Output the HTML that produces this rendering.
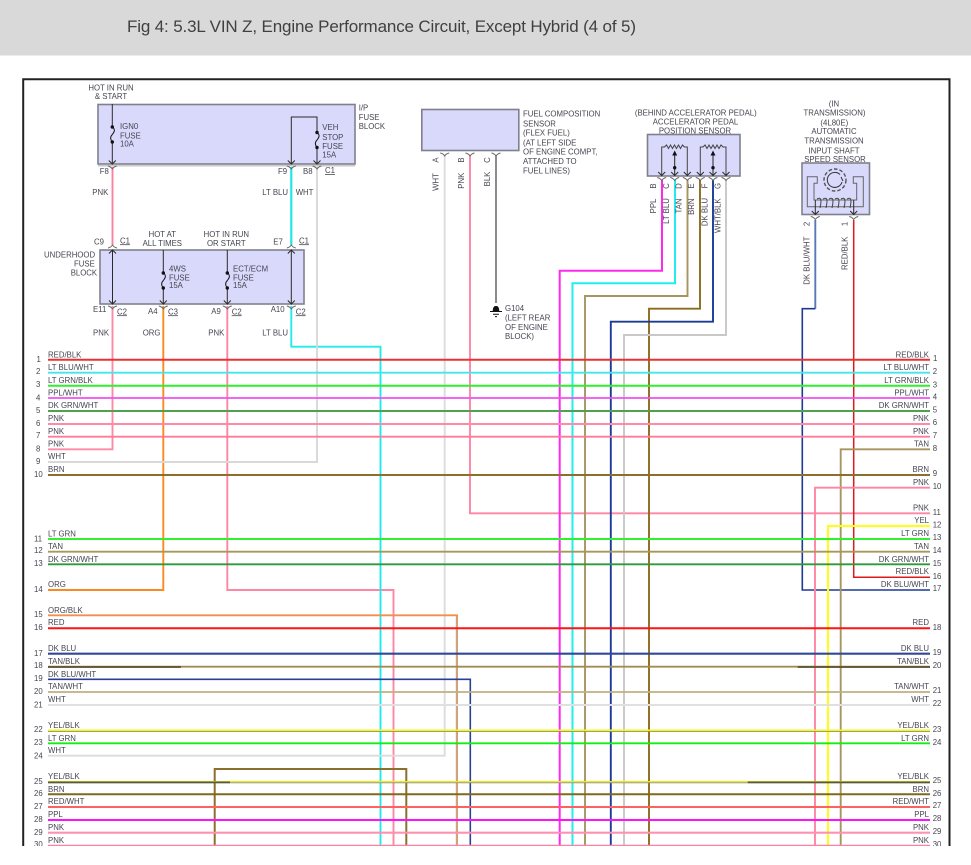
<!DOCTYPE html>
<html>
<head>
<meta charset="utf-8">
<style>
html,body{margin:0;padding:0;background:#fff;width:971px;height:865px;overflow:hidden}
svg{display:block}
text{font-family:"Liberation Sans",sans-serif;font-size:7.8px;fill:#454552}
.e{text-anchor:end}.m{text-anchor:middle}
.w{fill:none;stroke-linejoin:miter}
.b{fill:#d9d9fb;stroke:#80808c;stroke-width:1.6}
.k{fill:none;stroke:#2a2a2a;stroke-width:1}
.u{text-decoration:underline}
.dg{filter:blur(.25px)}
</style>
</head>
<body>
<svg width="971" height="865" viewBox="0 0 971 865" xmlns="http://www.w3.org/2000/svg">
<defs>
<clipPath id="c"><rect x="0" y="56" width="971" height="790"/></clipPath>
<g id="dn"><path d="M-3.5 -3.5L0 0L3.5 -3.5" fill="none" stroke="#2a2a2a" stroke-width="1"/><path d="M-4.5 2C-2 2.5 -1 3.5 0 5C1 3.5 2 2.5 4.5 2" fill="none" stroke="#666" stroke-width=".9"/></g>
<g id="up"><path d="M-3.5 3.5L0 0L3.5 3.5" fill="none" stroke="#2a2a2a" stroke-width="1"/><path d="M-4.5 -2C-2 -2.5 -1 -3.5 0 -5C1 -3.5 2 -2.5 4.5 -2" fill="none" stroke="#666" stroke-width=".9"/></g>
<g id="fu"><circle cx="0" cy="0" r="1.7" fill="#111"/><circle cx="0" cy="15" r="1.7" fill="#111"/><path d="M0 0C3.5 2.5 2 5 0 7.5C-2.5 10 -2 12.5 0 15" fill="none" stroke="#111" stroke-width="1"/></g>
</defs>
<rect width="971" height="865" fill="#fff"/>
<rect width="971" height="55.5" fill="#d9d9d9"/>
<text x="127" y="32" textLength="509" lengthAdjust="spacing" style="font-size:17px;fill:#404040">Fig 4: 5.3L VIN Z, Engine Performance Circuit, Except Hybrid (4 of 5)</text>

<g clip-path="url(#c)"><g class="dg">
<path d="M23.2 846V79.2H949.5V846" fill="none" stroke="#222" stroke-width="2"/>

<!-- vertical / routed wires -->
<g class="w" stroke-width="1.9">
<path d="M112.5 167V245" stroke="#ff7fa0"/>
<path d="M112.5 306V449.3H48" stroke="#ff8aa8"/>
<path d="M163.3 306V590H48" stroke="#f98a20"/>
<path d="M227.3 306V590H393.5V846" stroke="#ff85a5"/>
<path d="M291.3 167V245" stroke="#20e8e8" stroke-width="2.2"/>
<path d="M291.3 306V346.7H380.5V846" stroke="#20eaea"/>
<path d="M317 167V462H48" stroke="#d8d8d8"/>
<path d="M444.7 155V755.7H48" stroke="#dcdcdc"/>
<path d="M470 155V513.3H930" stroke="#ff85a5"/>
<path d="M496 155V303" stroke="#5a5a5a" stroke-width="1.4"/>
<path d="M662 180V270.7H559.7V846" stroke="#ff28ee" stroke-width="2"/>
<path d="M675 180V283.3H572.5V846" stroke="#20eeee" stroke-width="2"/>
<path d="M687.5 180V296H585V846" stroke="#a89460"/>
<path d="M700 180V308.7H649V846" stroke="#8a6c1e"/>
<path d="M713 180V321.7H610.8V846" stroke="#1c3a96"/>
<path d="M726 180V335H624V846" stroke="#c8c8c8"/>
<path d="M815.3 220V308.7" stroke="#5a78b8"/>
<path d="M815.3 308.7H802.3V590H930" stroke="#1c3a96" stroke-width="1.6"/>
<path d="M853.7 220V577.3H930" stroke="#e01818" stroke-width="1.5"/>
<path d="M930 449.3H840.7V846" stroke="#a89460"/>
<path d="M930 487.7H815V846" stroke="#ff85a5"/>
<path d="M930 526H828V846" stroke="#ffff10" stroke-width="2"/>
<path d="M48 615.3H457V846" stroke="#f09050"/>
<path d="M456.3 617V846" stroke="#b0b0a8" stroke-width="1"/>
<path d="M48 679.3H470.3V846" stroke="#2a3f96" stroke-width="1.6"/>
<path d="M214.7 846V769H406.3V846" stroke="#8b6f2a" stroke-width="2"/>
</g>

<!-- horizontal wires -->
<g stroke-width="1.8" fill="none">
<path d="M48 359.7H930" stroke="#e83232" stroke-width="2"/>
<path d="M48 372.7H930" stroke="#40e8e8"/>
<path d="M48 385.7H930" stroke="#30ee30" stroke-width="2"/>
<path d="M48 398H930" stroke="#f050f0"/>
<path d="M48 411H930" stroke="#50a050" stroke-width="2"/>
<path d="M48 424H930" stroke="#ff8aa8" stroke-width="2"/>
<path d="M48 436.7H930" stroke="#ff7a98"/>
<path d="M48 475H930" stroke="#8b6f2a" stroke-width="2"/>
<path d="M48 539H930" stroke="#30f030" stroke-width="2"/>
<path d="M48 551.7H930" stroke="#a89858"/>
<path d="M48 564.3H930" stroke="#2a9a3a"/>
<path d="M48 628.3H930" stroke="#ff1414" stroke-width="2"/>
<path d="M48 653.7H930" stroke="#30489a" stroke-width="2.1"/>
<path d="M48 666.7H930" stroke="#a08c50"/>
<path d="M48 667H181M797.7 667H930" stroke="#5c5030"/>
<path d="M48 692H930" stroke="#c0b080"/>
<path d="M48 705H930" stroke="#e0e0e0" stroke-width="2"/>
<path d="M48 731.4H930" stroke="#8f8f70" stroke-width="1"/>
<path d="M48 730.3H930" stroke="#f6f610" stroke-width="1.5"/>
<path d="M48 743.3H930" stroke="#10f010"/>
<path d="M48 782.7H930" stroke="#8f8f70" stroke-width="1"/>
<path d="M48 781.6H930" stroke="#ecec10" stroke-width="1.3"/>
<path d="M48 782.4H230M747.7 782.4H930" stroke="#5a5a38"/>
<path d="M48 794.3H930" stroke="#806820" stroke-width="2"/>
<path d="M48 807H930" stroke="#ff6060" stroke-width="2"/>
<path d="M48 820H930" stroke="#ff10ff" stroke-width="2"/>
<path d="M48 832.7H930" stroke="#ff90b0" stroke-width="2.1"/>
<path d="M48 845.7H930" stroke="#ff80a0"/>
</g>

<!-- component boxes -->
<rect class="b" x="98" y="104.5" width="257" height="59.5"/>
<path d="M98 165.8H355" stroke="#b8b8b8" stroke-width="1.2"/>
<rect class="b" x="100" y="250" width="204" height="54"/>
<rect class="b" x="421.8" y="109.5" width="97" height="41"/>
<rect class="b" x="647.5" y="134.5" width="92.5" height="41.5"/>
<rect class="b" x="802" y="163" width="67.5" height="51.5"/>

<!-- IP fuse block inner -->
<path class="k" d="M112.3 104V127M112.3 142V164"/>
<use href="#fu" x="112.3" y="127"/>
<path class="k" d="M291.3 164V117H317V132M317 148V164"/>
<use href="#fu" x="317" y="132.5"/>
<use href="#dn" x="112.3" y="164"/>
<use href="#dn" x="291.3" y="164"/>
<use href="#dn" x="317" y="164"/>

<!-- underhood inner -->
<path class="k" d="M112.5 250V304M291.3 250V304"/>
<path class="k" d="M163.3 250V272M163.3 288V304M227.3 250V272M227.3 288V304"/>
<use href="#fu" x="163.3" y="273"/>
<use href="#fu" x="227.3" y="273"/>
<use href="#up" x="112.5" y="250"/>
<use href="#up" x="291.3" y="250"/>
<use href="#dn" x="112.5" y="304"/>
<use href="#dn" x="163.3" y="304"/>
<use href="#dn" x="227.3" y="304"/>
<use href="#dn" x="291.3" y="304"/>

<!-- fuel sensor connectors -->
<g transform="translate(0,-2)">
<path d="M440.2 155C443 155.5 444 156.5 444.7 158C445.5 156.5 446.5 155.5 449.2 155M465.5 155C468 155.5 469 156.5 470 158C471 156.5 472 155.5 474.5 155M491.5 155C494 155.5 495 156.5 496 158C497 156.5 498 155.5 500.5 155" fill="none" stroke="#666" stroke-width=".9"/>
</g>

<!-- ground -->
<path d="M492.7 311C493 307 494 306 496 306C498 306 499 307 499.3 311Z" fill="#111"/>
<path d="M490 311.5H502M493 314.3H499M495 316.6H497" stroke="#111" stroke-width="1"/>

<!-- pedal sensor -->
<g fill="none" stroke="#444" stroke-width="1">
<path d="M661.7 175V147L664.5 147L666.5 145L668.5 148.5L670.5 145L672.5 148.5L674.5 145L676.5 148.5L678.5 145L680.5 148.5L682.5 145L684.5 147H687.3V175"/>
<path d="M700.3 175V147L703 147L705 145L707 148.5L709 145L711 148.5L713 145L715 148.5L717 145L719 148.5L721 145L723 147H726V175"/>
<path d="M674.7 175V153M713 175V153" stroke="#222"/>
</g>
<path d="M674.7 150.5L672.2 155.5H677.2ZM713 150.5L710.5 155.5H715.5Z" fill="#111"/>
<circle cx="674.7" cy="167.7" r="1.7" fill="#111"/><circle cx="713" cy="167.7" r="1.7" fill="#111"/>
<use href="#dn" x="661.7" y="175.5"/><use href="#dn" x="674.7" y="175.5"/><use href="#dn" x="687.3" y="175.5"/>
<use href="#dn" x="700.3" y="175.5"/><use href="#dn" x="713" y="175.5"/><use href="#dn" x="726" y="175.5"/>

<!-- trans sensor -->
<g fill="none" stroke="#555" stroke-width="1">
<path d="M807.3 176.7H817.3V183.3H814V200H856.7V183.3H853.3V176.7H863.3V206.7H807.3Z" stroke="#666"/>
<circle cx="835" cy="180" r="11" stroke="#555" stroke-width="1.4" stroke-dasharray="3.6 2"/>
<path d="M842 182A7.5 7.5 0 1 1 840 174.5" stroke="#333"/>
<path d="M841 177L843 181" stroke="#333"/>
<path d="M817 199C821 197 822 199 820 208M823 199C827 197 828 199 826 208M829 199C833 197 834 199 832 208M835 199C839 197 840 199 838 208M841 199C845 197 846 199 844 208M847 199C851 197 852 199 850 208" stroke="#444"/>
<path d="M815.3 200V214.5M853.7 200V214.5" stroke="#2a2a2a"/>
</g>
<use href="#dn" x="815.3" y="214.5"/><use href="#dn" x="853.7" y="214.5"/>

<!-- labels top -->
<text class="m" x="111" y="90.3">HOT IN RUN</text><text class="m" x="111" y="99">&amp; START</text>
<text x="358.7" y="110.3">I/P</text><text x="358.7" y="120">FUSE</text><text x="358.7" y="129">BLOCK</text>
<text x="120" y="129">IGN0</text><text x="120" y="138.3">FUSE</text><text x="120" y="146.3">10A</text>
<text x="322.3" y="130">VEH</text><text x="322.3" y="140">STOP</text><text x="322.3" y="149">FUSE</text><text x="322.3" y="157.3">15A</text>
<text x="99.7" y="174">F8</text><text x="278" y="174">F9</text><text x="303" y="174">B8</text><text class="u" x="325" y="173">C1</text>
<text x="92.3" y="195">PNK</text><text x="262.3" y="195">LT BLU</text><text x="295.7" y="195">WHT</text>
<text x="94" y="244.3">C9</text><text class="u" x="120" y="243.3">C1</text>
<text class="m" x="162.3" y="237">HOT AT</text><text class="m" x="162.3" y="246">ALL TIMES</text>
<text class="m" x="226.3" y="237">HOT IN RUN</text><text class="m" x="226.3" y="246">OR START</text>
<text x="273.3" y="244.3">E7</text><text class="u" x="299" y="243.3">C1</text>
<text x="44" y="257.3">UNDERHOOD</text><text x="74" y="266.3">FUSE</text><text x="70.7" y="275.3">BLOCK</text>
<text x="169" y="271.3">4WS</text><text x="169" y="280.3">FUSE</text><text x="169" y="288">15A</text>
<text x="233" y="271.3">ECT/ECM</text><text x="233" y="280.3">FUSE</text><text x="233" y="288">15A</text>
<text x="93" y="312">E11</text><text class="u" x="117" y="314.3">C2</text>
<text x="148" y="314">A4</text><text class="u" x="168" y="314.3">C3</text>
<text x="211.3" y="314">A9</text><text class="u" x="231.7" y="314.3">C2</text>
<text x="270.7" y="312">A10</text><text class="u" x="295.7" y="314.3">C2</text>
<text x="93" y="335.3">PNK</text><text x="142.7" y="335.3">ORG</text><text x="208.3" y="335.3">PNK</text><text x="262.3" y="335.3">LT BLU</text>

<text x="523" y="116.3">FUEL COMPOSITION</text><text x="523" y="126.3">SENSOR</text><text x="523" y="135.3">(FLEX FUEL)</text><text x="523" y="145.3">(AT LEFT SIDE</text><text x="523" y="154.3">OF ENGINE COMPT,</text><text x="523" y="164">ATTACHED TO</text><text x="523" y="173.3">FUEL LINES)</text>

<text class="m" transform="translate(438.5,160) rotate(-90)">A</text>
<text class="m" transform="translate(438.5,182) rotate(-90)">WHT</text>
<text class="m" transform="translate(464,160) rotate(-90)">B</text>
<text class="m" transform="translate(464,180.7) rotate(-90)">PNK</text>
<text class="m" transform="translate(490,160) rotate(-90)">C</text>
<text class="m" transform="translate(490,179) rotate(-90)">BLK</text>

<text class="m" x="695.8" y="115.3">(BEHIND ACCELERATOR PEDAL)</text><text class="m" x="695.5" y="124.3">ACCELERATOR PEDAL</text><text class="m" x="695" y="133.3">POSITION SENSOR</text>
<text class="m" transform="translate(656,186) rotate(-90)">B</text>
<text class="m" transform="translate(656,206) rotate(-90)">PPL</text>
<text class="m" transform="translate(669,186) rotate(-90)">C</text>
<text class="m" transform="translate(669,211) rotate(-90)">LT BLU</text>
<text class="m" transform="translate(681.3,186) rotate(-90)">D</text>
<text class="m" transform="translate(681.3,206) rotate(-90)">TAN</text>
<text class="m" transform="translate(694,186) rotate(-90)">E</text>
<text class="m" transform="translate(694,206.7) rotate(-90)">BRN</text>
<text class="m" transform="translate(707.7,186) rotate(-90)">F</text>
<text class="m" transform="translate(707.7,212) rotate(-90)">DK BLU</text>
<text class="m" transform="translate(720.7,186) rotate(-90)">G</text>
<text class="m" transform="translate(720.7,215.7) rotate(-90)">WHT/BLK</text>

<text class="m" x="834" y="106.3">(IN</text><text class="m" x="834.5" y="115.3">TRANSMISSION)</text><text class="m" x="834.3" y="125.3">(4L80E)</text><text class="m" x="834" y="134">AUTOMATIC</text><text class="m" x="834" y="143.3">TRANSMISSION</text><text class="m" x="834" y="153.3">INPUT SHAFT</text><text class="m" x="835" y="162">SPEED SENSOR</text>
<text class="m" transform="translate(809.7,224) rotate(-90)">2</text>
<text class="m" transform="translate(809.7,260.7) rotate(-90)">DK BLU/WHT</text>
<text class="m" transform="translate(847.3,224) rotate(-90)">1</text>
<text class="m" transform="translate(847.3,253.3) rotate(-90)">RED/BLK</text>

<text x="505" y="311">G104</text><text x="505" y="320.3">(LEFT REAR</text><text x="505" y="330">OF ENGINE</text><text x="505" y="339">BLOCK)</text>

<!-- left labels -->
<text x="48" y="357.3">RED/BLK</text><text x="48" y="370">LT BLU/WHT</text><text x="48" y="383">LT GRN/BLK</text><text x="48" y="395.3">PPL/WHT</text><text x="48" y="408">DK GRN/WHT</text><text x="48" y="421">PNK</text><text x="48" y="434">PNK</text><text x="48" y="446.3">PNK</text><text x="48" y="459">WHT</text><text x="48" y="472">BRN</text><text x="48" y="536.3">LT GRN</text><text x="48" y="549">TAN</text><text x="48" y="562">DK GRN/WHT</text><text x="48" y="587">ORG</text><text x="48" y="613">ORG/BLK</text><text x="48" y="625">RED</text><text x="48" y="651">DK BLU</text><text x="48" y="664">TAN/BLK</text><text x="48" y="677">DK BLU/WHT</text><text x="48" y="689">TAN/WHT</text><text x="48" y="702">WHT</text><text x="48" y="728">YEL/BLK</text><text x="48" y="741">LT GRN</text><text x="48" y="753">WHT</text><text x="48" y="779">YEL/BLK</text><text x="48" y="792">BRN</text><text x="48" y="804">RED/WHT</text><text x="48" y="817">PPL</text><text x="48" y="830">PNK</text><text x="48" y="843">PNK</text>

<!-- left numbers -->
<g>
<text x="36.5" y="362">1</text><text x="36" y="374">2</text><text x="36" y="387">3</text><text x="36" y="400.3">4</text><text x="36" y="413">5</text><text x="36" y="426">6</text><text x="36" y="438">7</text><text x="36" y="451.3">8</text><text x="36" y="464">9</text><text x="34" y="477">10</text><text x="34" y="541.3">11</text><text x="34" y="553">12</text><text x="34" y="566">13</text><text x="34" y="592">14</text><text x="34" y="617">15</text><text x="34" y="630">16</text><text x="34" y="656">17</text><text x="34" y="668">18</text><text x="34" y="681">19</text><text x="34" y="694">20</text><text x="34" y="707.3">21</text><text x="34" y="732">22</text><text x="34" y="745">23</text><text x="34" y="758.3">24</text><text x="34" y="784">25</text><text x="34" y="796">26</text><text x="34" y="809">27</text><text x="34" y="822">28</text><text x="34" y="835">29</text><text x="34" y="847">30</text>
</g>

<!-- right labels -->
<g class="e">
<text class="e" x="929" y="357.3">RED/BLK</text><text class="e" x="929" y="370">LT BLU/WHT</text><text class="e" x="929" y="383">LT GRN/BLK</text><text class="e" x="929" y="395.3">PPL/WHT</text><text class="e" x="929" y="408">DK GRN/WHT</text><text class="e" x="929" y="421">PNK</text><text class="e" x="929" y="434">PNK</text><text class="e" x="929" y="446.3">TAN</text><text class="e" x="929" y="472">BRN</text><text class="e" x="929" y="485">PNK</text><text class="e" x="929" y="510.3">PNK</text><text class="e" x="929" y="523">YEL</text><text class="e" x="929" y="536">LT GRN</text><text class="e" x="929" y="549">TAN</text><text class="e" x="929" y="562">DK GRN/WHT</text><text class="e" x="929" y="574">RED/BLK</text><text class="e" x="929" y="587">DK BLU/WHT</text><text class="e" x="929" y="625">RED</text><text class="e" x="929" y="651">DK BLU</text><text class="e" x="929" y="664">TAN/BLK</text><text class="e" x="929" y="689">TAN/WHT</text><text class="e" x="929" y="702">WHT</text><text class="e" x="929" y="728">YEL/BLK</text><text class="e" x="929" y="741">LT GRN</text><text class="e" x="929" y="779">YEL/BLK</text><text class="e" x="929" y="792">BRN</text><text class="e" x="929" y="804">RED/WHT</text><text class="e" x="929" y="817">PPL</text><text class="e" x="929" y="830">PNK</text><text class="e" x="929" y="843">PNK</text>
</g>

<!-- right numbers -->
<g>
<text x="933" y="361">1</text><text x="932.7" y="374">2</text><text x="932.7" y="387.3">3</text><text x="932.7" y="399.3">4</text><text x="932.7" y="412.3">5</text><text x="932.7" y="425">6</text><text x="932.7" y="438">7</text><text x="932.7" y="451">8</text><text x="932.7" y="476">9</text><text x="932.7" y="489">10</text><text x="932.7" y="515">11</text><text x="932.7" y="527.3">12</text><text x="932.7" y="540">13</text><text x="932.7" y="553">14</text><text x="932.7" y="566">15</text><text x="932.7" y="579">16</text><text x="932.7" y="591">17</text><text x="932.7" y="630">18</text><text x="932.7" y="655">19</text><text x="932.7" y="668">20</text><text x="932.7" y="693">21</text><text x="932.7" y="706">22</text><text x="932.7" y="732">23</text><text x="932.7" y="745">24</text><text x="932.7" y="783">25</text><text x="932.7" y="796">26</text><text x="932.7" y="808">27</text><text x="932.7" y="821">28</text><text x="932.7" y="834">29</text><text x="932.7" y="847">30</text>
</g>
</g></g>
</svg>
</body>
</html>
